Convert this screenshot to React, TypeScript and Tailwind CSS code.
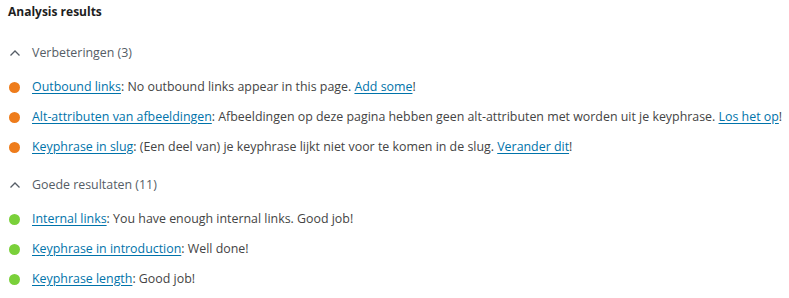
import React from "react";

type Part = { t: string; link?: boolean };
type Item = { color: "orange" | "green"; parts: Part[] };

const bad: Item[] = [
  { color: "orange", parts: [{ t: "Outbound links", link: true }, { t: ": No outbound links appear in this page. " }, { t: "Add some", link: true }, { t: "!" }] },
  { color: "orange", parts: [{ t: "Alt-attributen van afbeeldingen", link: true }, { t: ": Afbeeldingen op deze pagina hebben geen alt-attributen met worden uit je keyphrase. " }, { t: "Los het op", link: true }, { t: "!" }] },
  { color: "orange", parts: [{ t: "Keyphrase in slug", link: true }, { t: ": (Een deel van) je keyphrase lijkt niet voor te komen in de slug. " }, { t: "Verander dit", link: true }, { t: "!" }] },
];
const good: Item[] = [
  { color: "green", parts: [{ t: "Internal links", link: true }, { t: ": You have enough internal links. Good job!" }] },
  { color: "green", parts: [{ t: "Keyphrase in introduction", link: true }, { t: ": Well done!" }] },
  { color: "green", parts: [{ t: "Keyphrase length", link: true }, { t: ": Good job!" }] },
];

function Chevron() {
  return (
    <svg width="12" height="8" viewBox="0 0 12 8" className="shrink-0">
      <path d="M1.5 6.5 L6 2 L10.5 6.5" fill="none" stroke="#555d66" strokeWidth="1.3" />
    </svg>
  );
}

function Row({ item }: { item: Item }) {
  return (
    <li className="flex items-center h-[30px]">
      <span className={"w-[11px] h-[11px] rounded-full shrink-0 ml-[9px] mr-[12px] " + (item.color === "orange" ? "bg-[#ee7c1b]" : "bg-[#7ad03a]")} />
      <span className="whitespace-nowrap">
        {item.parts.map((p, i) =>
          p.link ? (
            <a key={i} href="#" className="text-[#0073aa] underline underline-offset-[2px]">{p.t}</a>
          ) : (
            <span key={i}>{p.t}</span>
          )
        )}
      </span>
    </li>
  );
}

function Section({ title, items }: { title: string; items: Item[] }) {
  return (
    <div>
      <div className="flex items-center h-[30px] text-[#555d66]">
        <span className="ml-[9px] mr-[11px] flex"><Chevron /></span>
        <span>{title}</span>
      </div>
      <ul className="mt-[4px]">
        {items.map((it, i) => <Row key={i} item={it} />)}
      </ul>
    </div>
  );
}

export default function App() {
  return (
    <div className="w-[789px] h-[298px] bg-white text-[#444] text-[12.4px] overflow-hidden" style={{ fontFamily: "'Open Sans', sans-serif" }}>
      <h2 className="font-bold text-[12px] text-[#1e1e1e] pl-[8px] pt-[2px] h-[22px] leading-[20px]">Analysis results</h2>
      <div className="mt-[16px]">
        <Section title="Verbeteringen (3)" items={bad} />
        <div className="mt-[8px]">
          <Section title="Goede resultaten (11)" items={good} />
        </div>
      </div>
    </div>
  );
}
